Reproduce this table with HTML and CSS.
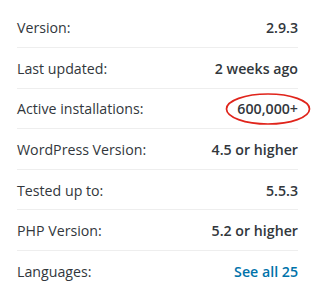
FILE: index.html
```
<!DOCTYPE html>
<html>
<head>
<meta charset="utf-8">
<link rel="stylesheet" href="styles.css">
</head>
<body>
<ul class="meta">
  <li class="row"><span class="label">Version:</span><strong class="value">2.9.3</strong></li>
  <li class="row"><span class="label">Last updated:</span><strong class="value">2 weeks ago</strong></li>
  <li class="row"><span class="label">Active installations:</span><strong class="value circled">600,000+<svg class="ring" width="86" height="34" viewBox="0 0 86 34"><ellipse cx="43" cy="17" rx="41.5" ry="15" fill="none" stroke="#e0241b" stroke-width="1.7"/></svg></strong></li>
  <li class="row"><span class="label">WordPress Version:</span><strong class="value">4.5 or higher</strong></li>
  <li class="row"><span class="label">Tested up to:</span><strong class="value">5.5.3</strong></li>
  <li class="row"><span class="label">PHP Version:</span><strong class="value">5.2 or higher</strong></li>
  <li class="row"><span class="label">Languages:</span><a class="value link" href="#">See all 25</a></li>
</ul>
</body>
</html>
```
FILE: styles.css
```
html, body {
  margin: 0;
  padding: 0;
  background: #fff;
}
body {
  font-family: "Open Sans", "Noto Sans", sans-serif;
  font-size: 14.2px;
  color: #32373c;
}
.meta {
  list-style: none;
  margin: 0;
  padding: 7.4px 13px 0 17px;
}
.row {
  display: flex;
  justify-content: space-between;
  align-items: center;
  height: 38.6px;
  padding-top: 1px;
  border-bottom: 1px solid #eeeeee;
}
.row:last-child {
  border-bottom: none;
}
.value {
  font-weight: 600;
}
.link {
  color: #0073aa;
  text-decoration: none;
}
.circled {
  position: relative;
}
.ring {
  position: absolute;
  left: -12px;
  top: -7px;
}
```
